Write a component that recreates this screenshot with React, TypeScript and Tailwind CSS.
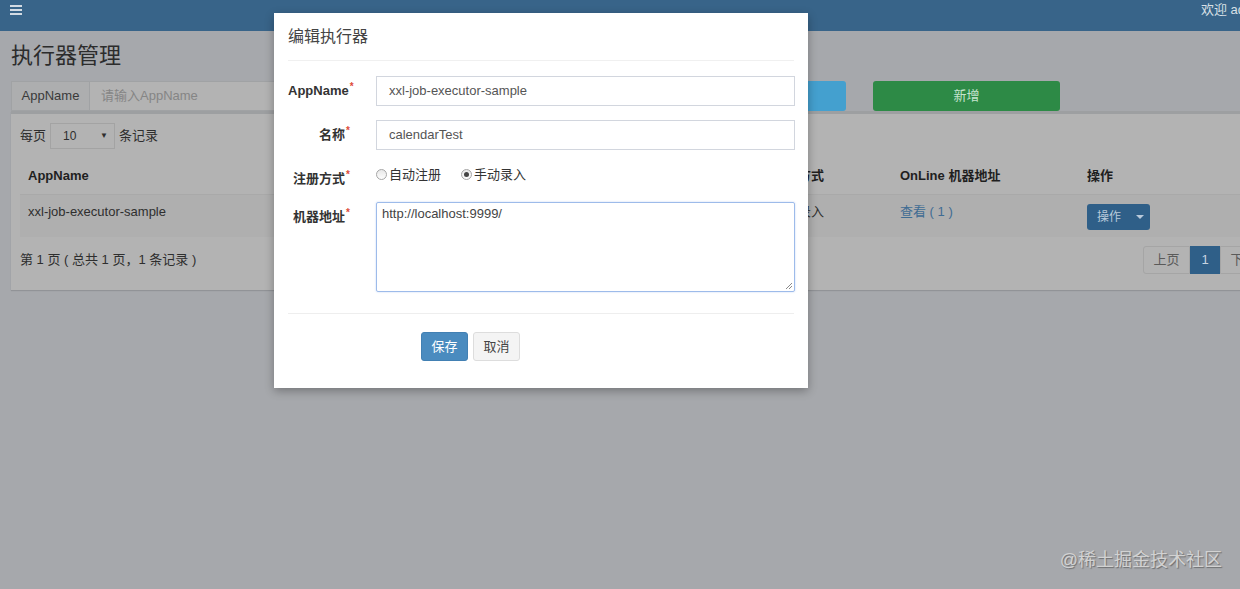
import React from 'react';

const font = "font-['Liberation_Sans','Noto_Sans_CJK_SC',sans-serif]";

function Radio({ checked }: { checked?: boolean }) {
  return (
    <span className="w-[11px] h-[11px] rounded-full border border-[#a6a6a6] bg-gradient-to-b from-[#e8e8e8] to-[#fdfdfd] flex items-center justify-center shrink-0">
      {checked && <span className="w-[5px] h-[5px] rounded-full bg-[#444]" />}
    </span>
  );
}

function Req() {
  return <sup className="text-[#dd4b39] text-[10px] ml-[1px]">*</sup>;
}

const columns = ['AppName', '名称', '排序', '注册方式', 'OnLine 机器地址', '操作'];

export default function App() {
  return (
    <div className={`relative w-[1240px] h-[589px] overflow-hidden bg-[#a6a8ac] ${font}`}>
      <div className="w-[1280px]">
        {/* top bar */}
        <div className="h-[31px] bg-[#386489] flex justify-between items-start pl-[10px] pr-[14px] pt-[4px]">
          <div className="flex flex-col gap-[2px] w-[12px] pt-[1px]">
            <span className="h-[2px] bg-[#d3dbe3]" />
            <span className="h-[2px] bg-[#d3dbe3]" />
            <span className="h-[2px] bg-[#d3dbe3]" />
          </div>
          <span className="text-[13px] leading-[13px] text-[#d9e0e6] whitespace-nowrap -mt-[1px]">欢迎 admin</span>
        </div>

        <div className="pl-[11px] pr-[3px]">
          <h1 className="mt-[13px] text-[22px] leading-[24px] text-[#2c2c2c] font-normal">执行器管理</h1>

          {/* search row */}
          <div className="mt-[13px] h-[30px] flex">
            <div className="w-[622px] flex border border-[#a0a2a4]">
              <span className="w-[78px] shrink-0 bg-[#adaeaf] border-r border-[#a0a2a4] text-[13px] text-[#3a3a3a] flex items-center justify-center">AppName</span>
              <span className="flex-1 bg-[#b3b3b3] text-[13px] text-[#858585] flex items-center pl-[11px]">请输入AppName</span>
            </div>
            <div className="ml-[26px] w-[187px] rounded-[3px] bg-[#44a0cf] text-[13px] text-[#d8ecf5] flex items-center justify-center">搜索</div>
            <div className="ml-[27px] w-[187px] rounded-[3px] bg-[#2d8a46] text-[13px] text-[#c6e4cf] flex items-center justify-center">新增</div>
          </div>

          {/* box */}
          <div className="bg-[#b3b3b3] border-t-[3px] border-[#9d9fa1] pl-[9px] pr-[10px] pt-[9px] pb-[16px] shadow-[0_1px_1px_rgba(0,0,0,0.12)]">
            <div className="flex items-center h-[26px] text-[13px] text-[#2e2e2e]">
              <span>每页</span>
              <div className="ml-[4px] w-[65px] h-[26px] border border-[#a3a3a3] flex items-center justify-between pl-[12px] pr-[6px] text-[12px]">
                <span>10</span>
                <span className="text-[8px]">▼</span>
              </div>
              <span className="ml-[4px]">条记录</span>
            </div>

            <div className="mt-[9px]">
              <div className="grid grid-cols-[280px_240px_224px_128px_187px_1fr] border-b border-[#a9a9a9] text-[13px] font-bold text-[#1f1f1f]">
                {columns.map(c => (
                  <div key={c} className="px-[8px] py-[8px] leading-[20px]">{c}</div>
                ))}
              </div>
              <div className="grid grid-cols-[280px_240px_224px_128px_187px_1fr] bg-[#afafaf] text-[13px] text-[#2e2e2e] h-[42px]">
                <div className="px-[8px] pt-[7px] leading-[20px]">xxl-job-executor-sample</div>
                <div className="px-[8px] pt-[7px] leading-[20px]">示例执行器</div>
                <div className="px-[8px] pt-[7px] leading-[20px]">1</div>
                <div className="px-[8px] pt-[7px] leading-[20px]">手动录入</div>
                <div className="px-[8px] pt-[7px] leading-[20px] text-[#3f6c93]">查看 ( 1 )</div>
                <div className="px-[8px] pt-[9px]">
                  <div className="w-[63px] h-[26px] rounded-[3px] bg-[#2f5f88] flex items-center pl-[10px] text-[12px] text-[#b9cadb]">
                    <span>操作</span>
                    <span className="ml-[15px] w-0 h-0 border-l-[4px] border-r-[4px] border-t-[4px] border-l-transparent border-r-transparent border-t-[#b9cadb]" />
                  </div>
                </div>
              </div>
            </div>

            <div className="mt-[9px] h-[28px] flex items-center justify-between text-[13px] text-[#2e2e2e]">
              <span>第 1 页 ( 总共 1 页，1 条记录 )</span>
              <div className="flex h-[28px] text-[13px]">
                <span className="w-[47px] border border-[#a5a5a5] rounded-l-[3px] flex items-center justify-center text-[#5a5a5a]">上页</span>
                <span className="w-[30px] bg-[#2f5f88] flex items-center justify-center text-[#c8d4e0]">1</span>
                <span className="w-[47px] border border-[#a5a5a5] rounded-r-[3px] flex items-center justify-center text-[#5a5a5a]">下页</span>
              </div>
            </div>
          </div>
        </div>
      </div>

      {/* edit dialog */}
      <div className="absolute left-[274px] top-[13px] w-[534px] h-[375px] bg-white shadow-[0_3px_9px_rgba(0,0,0,0.3)]">
        <div className="mx-[14px] h-[48px] border-b border-[#f0f0f0] flex items-center">
          <span className="text-[16px] text-[#444]">编辑执行器</span>
        </div>

        <div className="pl-[14px] pr-[13px] pt-[15px] flex flex-col gap-[14px] text-[13px]">
          <div className="grid grid-cols-[62px_1fr] gap-x-[26px] items-start">
            <label className="pt-[5px] leading-[20px] font-bold text-[#333] text-right whitespace-nowrap">AppName<Req /></label>
            <div className="h-[30px] border border-[#d2d6de] flex items-center pl-[12px] text-[#555]">xxl-job-executor-sample</div>
          </div>
          <div className="grid grid-cols-[62px_1fr] gap-x-[26px] items-start">
            <label className="pt-[5px] leading-[20px] font-bold text-[#333] text-right whitespace-nowrap">名称<Req /></label>
            <div className="h-[30px] border border-[#d2d6de] flex items-center pl-[12px] text-[#555]">calendarTest</div>
          </div>
          <div className="grid grid-cols-[62px_1fr] gap-x-[26px] items-start h-[24px]">
            <label className="pt-[5px] leading-[20px] font-bold text-[#333] text-right whitespace-nowrap">注册方式<Req /></label>
            <div className="pt-[1px] flex items-center h-[20px] text-[#333]">
              <Radio />
              <span className="ml-[2px]">自动注册</span>
              <span className="ml-[20px]"><Radio checked /></span>
              <span className="ml-[2px]">手动录入</span>
            </div>
          </div>
          <div className="grid grid-cols-[62px_1fr] gap-x-[26px] items-start">
            <label className="pt-[5px] leading-[20px] font-bold text-[#333] text-right whitespace-nowrap">机器地址<Req /></label>
            <div className="relative h-[90px] border border-[#9dbbea] rounded-[2px] pl-[5px] pt-[1px] text-[#444] leading-[20px] shadow-[0_0_2px_rgba(102,150,233,0.4)]">
              http://localhost:9999/
              <svg className="absolute right-[1px] bottom-[1px]" width="8" height="8" viewBox="0 0 8 8">
                <path d="M7 1 L1 7 M7 4 L4 7" stroke="#8a8a8a" strokeWidth="1" />
              </svg>
            </div>
          </div>
        </div>

        <div className="mx-[14px] mt-[21px] border-t border-[#eeeeee] pt-[18px] pl-[133px] flex gap-[5px] text-[13px]">
          <span className="w-[47px] h-[29px] rounded-[3px] bg-[#4a8bbf] border border-[#4280b3] text-white flex items-center justify-center">保存</span>
          <span className="w-[47px] h-[29px] rounded-[3px] bg-[#f4f4f4] border border-[#dddddd] text-[#444] flex items-center justify-center">取消</span>
        </div>
      </div>

      <div className="absolute right-[18px] bottom-[18px] text-[18px] leading-[22px] text-[#d2d2d2] [text-shadow:1px_1px_1px_rgba(0,0,0,0.35)]">@稀土掘金技术社区</div>
    </div>
  );
}
